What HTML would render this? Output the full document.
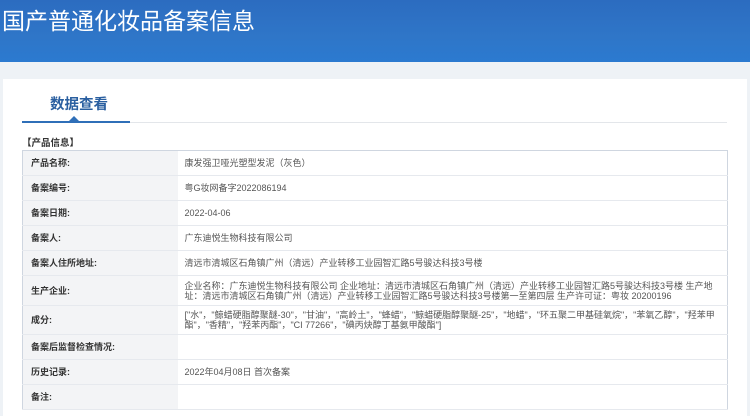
<!DOCTYPE html>
<html><head><meta charset="utf-8"><style>
*{margin:0;padding:0;box-sizing:border-box}
body{width:750px;height:416px;overflow:hidden;background:#eef2f6;font-family:"Liberation Sans","Noto Sans CJK SC",sans-serif;position:relative}
.hd{position:absolute;left:0;top:0;width:750px;height:62px;background:linear-gradient(180deg,#2c6cc0 0%,#2f76c8 60%,#2b7ad0 100%)}
.hd h1{position:absolute;left:2px;top:2px;font-size:23px;font-weight:normal;color:#fff;letter-spacing:0;white-space:nowrap}
.card{position:absolute;left:3px;top:79px;width:744px;height:337px;background:#fff}
.tab{position:absolute;left:47px;top:14px;font-size:14.5px;font-weight:bold;color:#2a5fa0}
.line{position:absolute;left:19px;top:43px;width:705px;height:1px;background:#e3e6ea}
.bl{position:absolute;left:19px;top:42px;width:108px;height:2px;background:#2f6fb8}
.tri{position:absolute;left:66px;top:37px;width:0;height:0;border-left:5px solid transparent;border-right:5px solid transparent;border-bottom:5px solid #2f6fb8}
.sec{position:absolute;left:22px;top:138px;font-size:9.5px;line-height:12px;font-weight:bold;color:#333;z-index:2}
table{position:absolute;left:22px;top:150px;width:706px;border-collapse:collapse;border:1px solid #cfd6e0;font-size:9px}
td{border-bottom:1px solid #e6e9ee;vertical-align:middle;line-height:10px}
td.l{width:155px;background:#f3f4f6;color:#333;font-weight:bold;padding-left:8px}
td.v{color:#555;padding-left:7px;padding-right:10px}
</style></head><body>
<div class="hd"><h1>国产普通化妆品备案信息</h1></div>
<div class="card">
<div class="tab">数据查看</div>
<div class="line"></div>
<div class="bl"></div>
<div class="tri"></div>
</div>
<div class="sec">【产品信息】</div>
<table>
<tr style="height:25px"><td class="l">产品名称:</td><td class="v">康发强卫哑光塑型发泥（灰色）</td></tr>
<tr style="height:25px"><td class="l">备案编号:</td><td class="v">粤G妆网备字2022086194</td></tr>
<tr style="height:25px"><td class="l">备案日期:</td><td class="v">2022-04-06</td></tr>
<tr style="height:25px"><td class="l">备案人:</td><td class="v">广东迪悦生物科技有限公司</td></tr>
<tr style="height:25px"><td class="l">备案人住所地址:</td><td class="v">清远市清城区石角镇广州（清远）产业转移工业园智汇路5号骏达科技3号楼</td></tr>
<tr style="height:30px"><td class="l">生产企业:</td><td class="v">企业名称：广东迪悦生物科技有限公司 企业地址：清远市清城区石角镇广州（清远）产业转移工业园智汇路5号骏达科技3号楼 生产地址：清远市清城区石角镇广州（清远）产业转移工业园智汇路5号骏达科技3号楼第一至第四层 生产许可证：粤妆 20200196</td></tr>
<tr style="height:29px"><td class="l">成分:</td><td class="v">["水"，"鲸蜡硬脂醇聚醚-30"，"甘油"，"高岭土"，"蜂蜡"，"鲸蜡硬脂醇聚醚-25"，"地蜡"，"环五聚二甲基硅氧烷"，"苯氧乙醇"，"羟苯甲酯"，"香精"，"羟苯丙酯"，"CI 77266"，"碘丙炔醇丁基氨甲酸酯"]</td></tr>
<tr style="height:25px"><td class="l">备案后监督检查情况:</td><td class="v"></td></tr>
<tr style="height:25px"><td class="l">历史记录:</td><td class="v">2022年04月08日 首次备案</td></tr>
<tr style="height:25px"><td class="l">备注:</td><td class="v"></td></tr>
</table>
</body></html>
